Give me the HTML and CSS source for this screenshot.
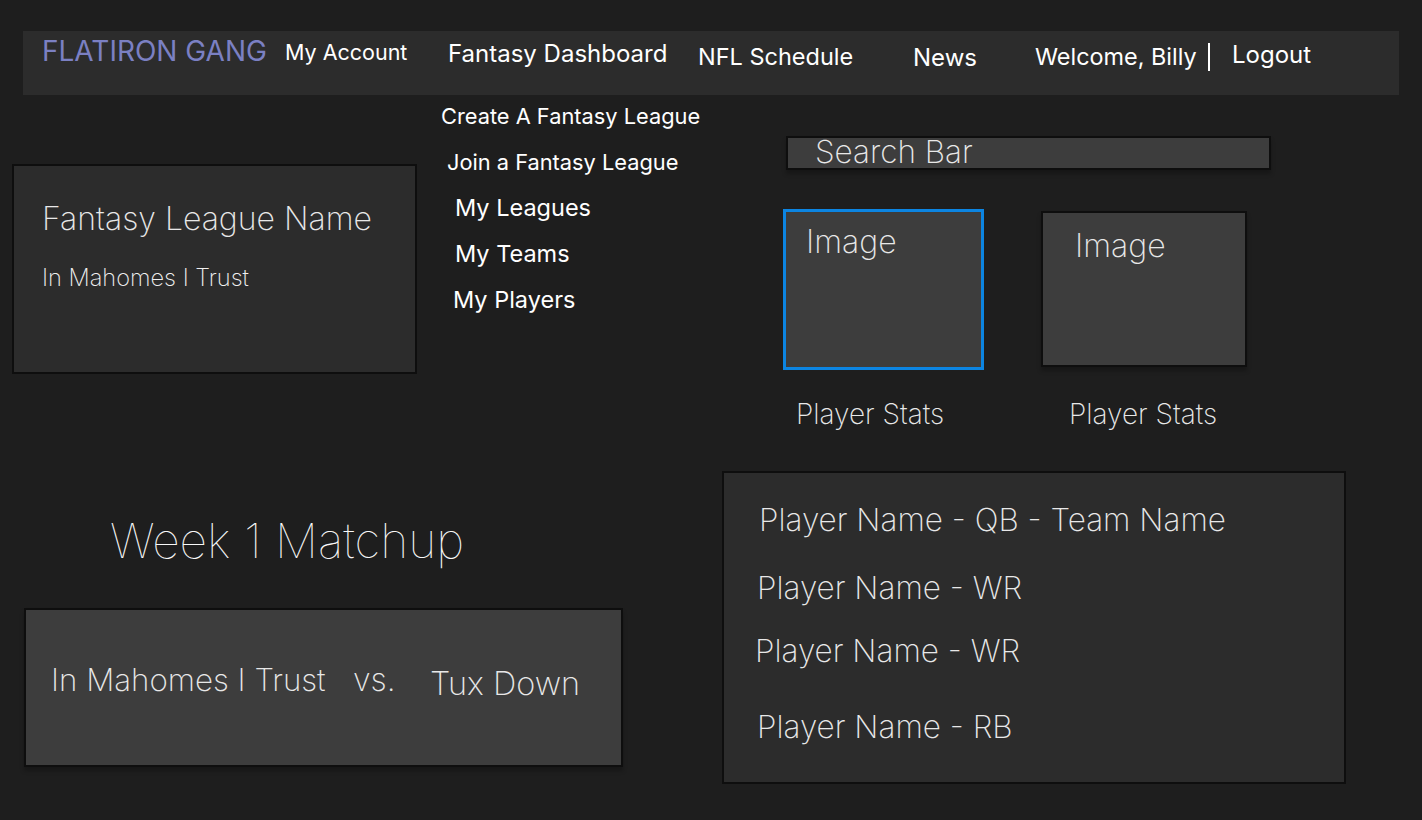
FILE: index.html
```html
<!DOCTYPE html>
<html lang="en">
<head>
<meta charset="utf-8">
<title>Flatiron Gang – Fantasy Dashboard</title>
<link rel="stylesheet" href="styles.css">
</head>
<body>
<header class="nav">
  <a class="nav-item logo">FLATIRON GANG</a>
  <a class="nav-item account">My Account</a>
  <a class="nav-item dash">Fantasy Dashboard</a>
  <a class="nav-item sched">NFL Schedule</a>
  <a class="nav-item news">News</a>
  <span class="nav-item welcome">Welcome, Billy</span>
  <span class="nav-sep"></span>
  <a class="nav-item logout">Logout</a>
</header>

<section class="upper">
  <div class="league-card">
    <h2 class="league-name">Fantasy League Name</h2>
    <p class="team-name">In Mahomes I Trust</p>
  </div>

  <ul class="menu">
    <li class="menu-sm create">Create A Fantasy League</li>
    <li class="menu-sm join">Join a Fantasy League</li>
    <li class="menu-lg leagues">My Leagues</li>
    <li class="menu-lg teams">My Teams</li>
    <li class="menu-lg players">My Players</li>
  </ul>

  <div class="players-col">
    <div class="search">Search Bar</div>
    <div class="images">
      <div class="img-box selected"><span class="img-label">Image</span></div>
      <div class="img-box plain"><span class="img-label">Image</span></div>
    </div>
    <div class="stats">
      <span class="stat first">Player Stats</span>
      <span class="stat">Player Stats</span>
    </div>
  </div>
</section>

<section class="lower">
  <div class="matchup-col">
    <h1 class="week">Week 1 Matchup</h1>
    <div class="matchup">
      <span class="m-team home">In Mahomes I Trust</span>
      <span class="m-vs">vs.</span>
      <span class="m-team away">Tux Down</span>
    </div>
  </div>

  <ul class="roster">
    <li class="r1">Player Name - QB - Team Name</li>
    <li class="r2">Player Name - WR</li>
    <li class="r3">Player Name - WR</li>
    <li class="r4">Player Name - RB</li>
  </ul>
</section>
</body>
</html>
```

FILE: styles.css
```css
* { box-sizing: border-box; }

html, body {
  margin: 0;
  padding: 0;
}

body {
  width: 1422px;
  height: 820px;
  overflow: hidden;
  background: #1e1e1e;
  color: #ffffff;
  font-family: Inter, "Noto Sans", sans-serif;
}

h1, h2, p, ul { margin: 0; padding: 0; }
ul { list-style: none; }

/* ---------- nav ---------- */
.nav {
  margin: 31px 23px 0 23px;
  height: 64px;
  background: #2c2c2c;
  display: flex;
  align-items: flex-start;
  padding-left: 19px;
}

.nav-item {
  flex: none;
  line-height: 1;
  white-space: nowrap;
  color: #ffffff;
  font-weight: 400;
}

.logo    { width: 243px; font-size: 28px; margin-top: 6px; color: #7b80c3; }
.account { width: 163px; font-size: 21.5px; margin-top: 11px; }
.dash    { width: 250px; font-size: 24px; margin-top: 11px; }
.sched   { width: 215px; font-size: 23.5px; margin-top: 14px; }
.news    { width: 122px; font-size: 24px; margin-top: 15px; }
.welcome { width: 173px; font-size: 23.4px; margin-top: 14px; }
.logout  { font-size: 24px; margin-top: 12px; margin-left: 22px; }

.nav-sep {
  flex: none;
  width: 2px;
  height: 28px;
  margin-top: 12px;
  background: #ffffff;
}

/* ---------- upper area ---------- */
.upper {
  display: flex;
  align-items: flex-start;
  height: 375px;
}

.league-card {
  flex: none;
  width: 405px;
  height: 210px;
  margin: 69px 0 0 12px;
  background: #2c2c2c;
  border: 2px solid #0e0e0e;
  padding: 37px 0 0 28px;
}

.league-name {
  font-size: 32px;
  font-weight: 150;
  line-height: 1;
  color: #e8e8e8;
}

.team-name {
  font-size: 23.6px;
  font-weight: 200;
  line-height: 1;
  margin-top: 31px;
  color: #f0f0f0;
}

.menu {
  flex: none;
  width: 342px;
  margin: -2px 0 0 24px;
  line-height: 46px;
  white-space: nowrap;
}

.menu-sm { font-size: 21.8px; }
.menu-lg { font-size: 23.5px; }
.join    { padding-left: 6px; }
.leagues { padding-left: 14px; }
.teams   { padding-left: 14px; }
.players { padding-left: 12px; }

.players-col {
  flex: none;
  width: 600px;
}

.search {
  width: 485px;
  height: 34px;
  margin: 41px 0 0 3px;
  background: #3d3d3d;
  border: 2px solid #0e0e0e;
  box-shadow: 0 4px 4px rgba(0, 0, 0, 0.25);
  padding-left: 27px;
  font-size: 31.5px;
  font-weight: 150;
  line-height: 27px;
  color: #e8e8e8;
}

.images {
  display: flex;
  align-items: flex-start;
  margin-top: 39px;
}

.img-box {
  flex: none;
  background: #3d3d3d;
}

.img-label {
  display: block;
  font-size: 32px;
  font-weight: 150;
  line-height: 1;
  color: #e8e8e8;
}

.selected {
  width: 201px;
  height: 161px;
  border: 3px solid #0c85e2;
  padding: 14px 0 0 20px;
}

.plain {
  width: 206px;
  height: 156px;
  margin: 2px 0 0 57px;
  border: 2px solid #0e0e0e;
  box-shadow: 0 4px 4px rgba(0, 0, 0, 0.25);
  padding: 17px 0 0 32px;
}

.stats {
  display: flex;
  margin-top: 30px;
  padding-left: 13px;
}

.stat {
  font-size: 28px;
  font-weight: 150;
  line-height: 1;
  color: #e8e8e8;
  white-space: nowrap;
}

.stat.first { width: 273px; }

/* ---------- lower area ---------- */
.lower {
  display: flex;
  align-items: flex-start;
}

.matchup-col {
  flex: none;
  width: 599px;
  margin-left: 24px;
}

.week {
  margin: 47px 0 0 86px;
  font-size: 48px;
  font-weight: 100;
  line-height: 1;
  color: #f8f8f8;
}

.matchup {
  display: flex;
  align-items: flex-start;
  height: 159px;
  margin-top: 43px;
  background: #3d3d3d;
  border: 2px solid #0e0e0e;
  box-shadow: 0 4px 4px rgba(0, 0, 0, 0.25);
  padding-left: 25px;
  font-weight: 150;
  line-height: 1;
  color: #e8e8e8;
  white-space: nowrap;
}

.home  { width: 302px; font-size: 31.3px; margin-top: 55px; }
.m-vs  { width: 77px;  font-size: 32px; margin-top: 54px; }
.away  { font-size: 32.5px; margin-top: 58px; }

.roster {
  flex: none;
  width: 624px;
  height: 313px;
  margin: 1px 0 0 99px;
  background: #2c2c2c;
  border: 2px solid #0e0e0e;
  font-size: 31.5px;
  font-weight: 150;
  line-height: 1;
  color: #e8e8e8;
  white-space: nowrap;
}

.r1 { margin: 31px 0 0 35px; }
.r2 { margin: 36px 0 0 33px; }
.r3 { margin: 32px 0 0 31px; }
.r4 { margin: 44px 0 0 33px; }
```
